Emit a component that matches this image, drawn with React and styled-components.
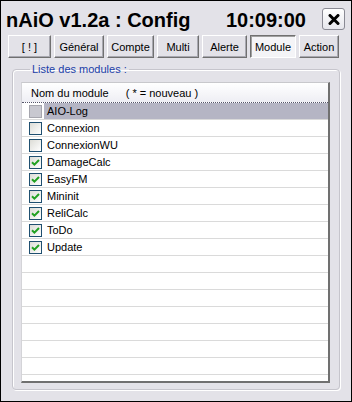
import React from 'react';
import styled, { createGlobalStyle } from 'styled-components';

const GlobalStyle = createGlobalStyle`
    html, body { margin: 0; padding: 0; background: #e3e2e8; }
    #root { width: 352px; height: 402px; }
`;

const Window = styled.div`
    width: 352px;
    height: 402px;
    box-sizing: border-box;
    border: 1px solid #000;
    background: #e3e2e8;
    font-family: "Liberation Sans", Arial, sans-serif;
    display: flex;
    flex-direction: column;
    overflow: hidden;
`;

const TitleBar = styled.div`
    height: 34px;
    display: flex;
    align-items: center;
    padding: 0 6px 0 5px;
`;

const Title = styled.div`
    font-size: 20px;
    font-weight: bold;
    color: #000;
    line-height: 23px;
    padding-top: 4px;
    flex: 1;
`;

const Clock = styled(Title)`
    flex: none;
    margin-right: 16px;
`;

const CloseButton = styled.div`
    width: 21px;
    height: 20px;
    border: 1px solid #8a8a94;
    border-radius: 3px;
    background: linear-gradient(#ffffff, #e6e6ec);
    display: flex;
    align-items: center;
    justify-content: center;
    margin-top: 2px;
`;

const Tabs = styled.div`
    display: flex;
    gap: 3px;
    padding-left: 7px;
    height: 23px;
`;

const Tab = styled.div`
    width: ${p => p.w}px;
    height: 23px;
    box-sizing: border-box;
    display: flex;
    align-items: center;
    justify-content: center;
    font-size: 11px;
    color: #000;
    background: ${p => (p.active ? '#f4f4f7' : '#e3e2e8')};
    border-top: 1px solid ${p => (p.active ? '#707070' : '#ffffff')};
    border-left: 1px solid ${p => (p.active ? '#707070' : '#ffffff')};
    border-right: 1px solid ${p => (p.active ? '#ffffff' : '#707070')};
    border-bottom: 1px solid ${p => (p.active ? '#ffffff' : '#707070')};
    box-shadow: ${p => (p.active
        ? 'inset 1px 1px 0 #a0a0a0'
        : 'inset -1px -1px 0 #a8a8b0')};
`;

const Group = styled.fieldset`
    margin: 5px 11px 11px 11px;
    padding: 6px 9px 6px 8px;
    border: 1px solid #c6c5cc;
    border-radius: 4px;
    box-shadow: inset 1px 1px 0 #ffffff, 1px 1px 0 #ffffff;
    flex: 1;
    min-height: 0;
    display: flex;
    flex-direction: column;
`;

const Legend = styled.legend`
    font-size: 11px;
    color: #1c3fa8;
    padding: 0 2px;
    margin-left: 9px;
    line-height: 13px;
`;

const List = styled.div`
    flex: 1;
    background: #ffffff;
    border-top: 1px solid #c8c8cc;
    border-left: 1px solid #d4d4d8;
    border-right: 2px solid #707070;
    border-bottom: 2px solid #707070;
    overflow: hidden;
`;

const Header = styled.div`
    height: 20px;
    box-sizing: border-box;
    display: flex;
    align-items: center;
    padding-left: 9px;
    font-size: 11px;
    color: #000;
    background: linear-gradient(#ffffff, #eeeef4);
    border-bottom: 1px dotted #55556a;
`;

const HeaderNote = styled.span`
    margin-left: 17px;
`;

const Row = styled.div`
    height: 17px;
    box-sizing: border-box;
    display: flex;
    align-items: stretch;
    padding-left: 7px;
    border-bottom: 1px solid #dadada;
`;

const CheckCell = styled.div`
    width: 15px;
    display: flex;
    align-items: center;
`;

const Label = styled.div`
    flex: 1;
    display: flex;
    align-items: center;
    padding-left: 3px;
    font-size: 11px;
    color: #000;
    background: ${p => (p.selected ? '#b5b5c4' : 'transparent')};
`;

const Box = styled.span`
    width: 13px;
    height: 13px;
    box-sizing: border-box;
    display: flex;
    align-items: center;
    justify-content: center;
    border: 1px solid ${p => (p.disabled ? '#a6a6ae' : '#1f4f70')};
    background: ${p => (p.disabled
        ? '#c8c8d0'
        : 'linear-gradient(135deg, #dcdcd6, #ffffff)')};
`;

function CheckBox({ checked, disabled }) {
    return (
        <Box disabled={disabled}>
            {checked && (
                <svg width="9" height="9" viewBox="0 0 9 9">
                    <path d="M1 4.2 L3.4 6.6 L8 2" fill="none" stroke="#21a121" strokeWidth="2" />
                </svg>
            )}
        </Box>
    );
}

const modules = [
    { name: 'AIO-Log', checked: false, disabled: true, selected: true },
    { name: 'Connexion', checked: false },
    { name: 'ConnexionWU', checked: false },
    { name: 'DamageCalc', checked: true },
    { name: 'EasyFM', checked: true },
    { name: 'Mininit', checked: true },
    { name: 'ReliCalc', checked: true },
    { name: 'ToDo', checked: true },
    { name: 'Update', checked: true },
];

const tabs = [
    { label: '[ ! ]', w: 43 },
    { label: 'Général', w: 50 },
    { label: 'Compte', w: 47 },
    { label: 'Multi', w: 42 },
    { label: 'Alerte', w: 45 },
    { label: 'Module', w: 46, active: true },
    { label: 'Action', w: 40 },
];

export default function App() {
    return (
        <>
            <GlobalStyle />
            <Window>
                <TitleBar>
                    <Title>nAiO v1.2a : Config</Title>
                    <Clock>10:09:00</Clock>
                    <CloseButton>
                        <svg width="12" height="11" viewBox="0 0 12 11">
                            <path d="M2 1.5 L10 9.5 M10 1.5 L2 9.5" stroke="#000" strokeWidth="3" strokeLinecap="round" />
                        </svg>
                    </CloseButton>
                </TitleBar>
                <Tabs>
                    {tabs.map(t => (
                        <Tab key={t.label} w={t.w} active={t.active}>{t.label}</Tab>
                    ))}
                </Tabs>
                <Group>
                    <Legend>Liste des modules :</Legend>
                    <List>
                        <Header>
                            Nom du module
                            <HeaderNote>( * = nouveau )</HeaderNote>
                        </Header>
                        {modules.map(m => (
                            <Row key={m.name}>
                                <CheckCell>
                                    <CheckBox checked={m.checked} disabled={m.disabled} />
                                </CheckCell>
                                <Label selected={m.selected}>{m.name}</Label>
                            </Row>
                        ))}
                        {Array.from({ length: 9 }, (_, i) => (
                            <Row key={'empty' + i} />
                        ))}
                    </List>
                </Group>
            </Window>
        </>
    );
}
